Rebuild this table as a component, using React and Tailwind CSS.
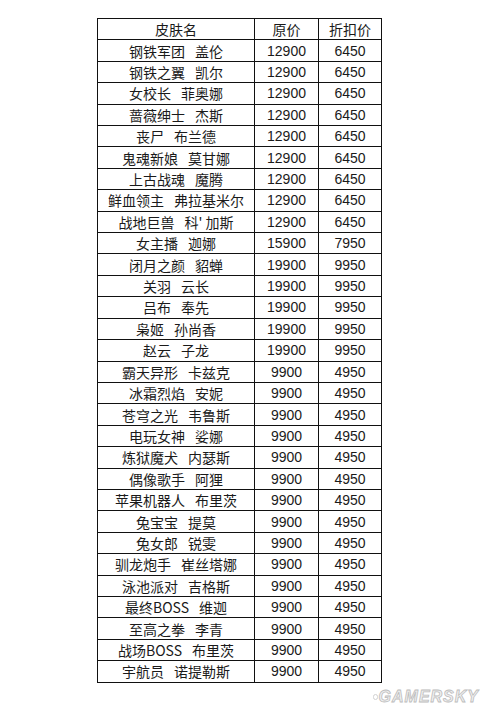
import React from 'react';

const rows = [
  ['钢铁军团', '盖伦', '12900', '6450'],
  ['钢铁之翼', '凯尔', '12900', '6450'],
  ['女校长', '菲奥娜', '12900', '6450'],
  ['蔷薇绅士', '杰斯', '12900', '6450'],
  ['丧尸', '布兰德', '12900', '6450'],
  ['鬼魂新娘', '莫甘娜', '12900', '6450'],
  ['上古战魂', '魔腾', '12900', '6450'],
  ['鲜血领主', '弗拉基米尔', '12900', '6450'],
  ['战地巨兽', "科' 加斯", '12900', '6450'],
  ['女主播', '迦娜', '15900', '7950'],
  ['闭月之颜', '貂蝉', '19900', '9950'],
  ['关羽', '云长', '19900', '9950'],
  ['吕布', '奉先', '19900', '9950'],
  ['枭姬', '孙尚香', '19900', '9950'],
  ['赵云', '子龙', '19900', '9950'],
  ['霸天异形', '卡兹克', '9900', '4950'],
  ['冰霜烈焰', '安妮', '9900', '4950'],
  ['苍穹之光', '韦鲁斯', '9900', '4950'],
  ['电玩女神', '娑娜', '9900', '4950'],
  ['炼狱魔犬', '内瑟斯', '9900', '4950'],
  ['偶像歌手', '阿狸', '9900', '4950'],
  ['苹果机器人', '布里茨', '9900', '4950'],
  ['兔宝宝', '提莫', '9900', '4950'],
  ['兔女郎', '锐雯', '9900', '4950'],
  ['驯龙炮手', '崔丝塔娜', '9900', '4950'],
  ['泳池派对', '吉格斯', '9900', '4950'],
  ['最终BOSS', '维迦', '9900', '4950'],
  ['至高之拳', '李青', '9900', '4950'],
  ['战场BOSS', '布里茨', '9900', '4950'],
  ['宇航员', '诺提勒斯', '9900', '4950'],
];

const cell = 'h-[21.42px] border-r border-b border-[#111] flex items-center justify-center leading-none';
const cjk = "font-['Noto_Sans_CJK_SC',sans-serif] text-[14px]";
const num = "font-['Liberation_Sans_Narrow','Liberation_Sans',sans-serif] text-[14px]";

export default function App() {
  return (
    <div className="min-h-screen bg-white text-[#1a1a1a]">
      <div className="pt-[18px] pl-[97px]">
        <div className="w-[285px] grid grid-cols-[157px_64px_63px] border-l border-t border-[#111]">
          <div className={`${cell} ${cjk}`}>皮肤名</div>
          <div className={`${cell} ${cjk}`}>原价</div>
          <div className={`${cell} ${cjk}`}>折扣价</div>
          {rows.map(([skin, hero, price, sale]) => (
            <React.Fragment key={skin + hero}>
              <div className={`${cell} ${cjk} gap-[10px]`}>
                <span>{skin}</span>
                <span>{hero}</span>
              </div>
              <div className={`${cell} ${num}`}>{price}</div>
              <div className={`${cell} ${num}`}>{sale}</div>
            </React.Fragment>
          ))}
        </div>
      </div>

      {/* watermark */}
      <div className="flex items-center justify-end gap-[1px] pr-[1px] mt-[6px]">
        <span className="w-[5px] h-[6px] rounded-full border border-[#d2d2d2]" />
        <span className="font-['Liberation_Sans',sans-serif] font-bold italic text-[16px] leading-none tracking-[1px] text-[#f0f0f0] [-webkit-text-stroke:0.8px_#bdbdbd]">
          GAMERSKY
        </span>
      </div>
    </div>
  );
}
